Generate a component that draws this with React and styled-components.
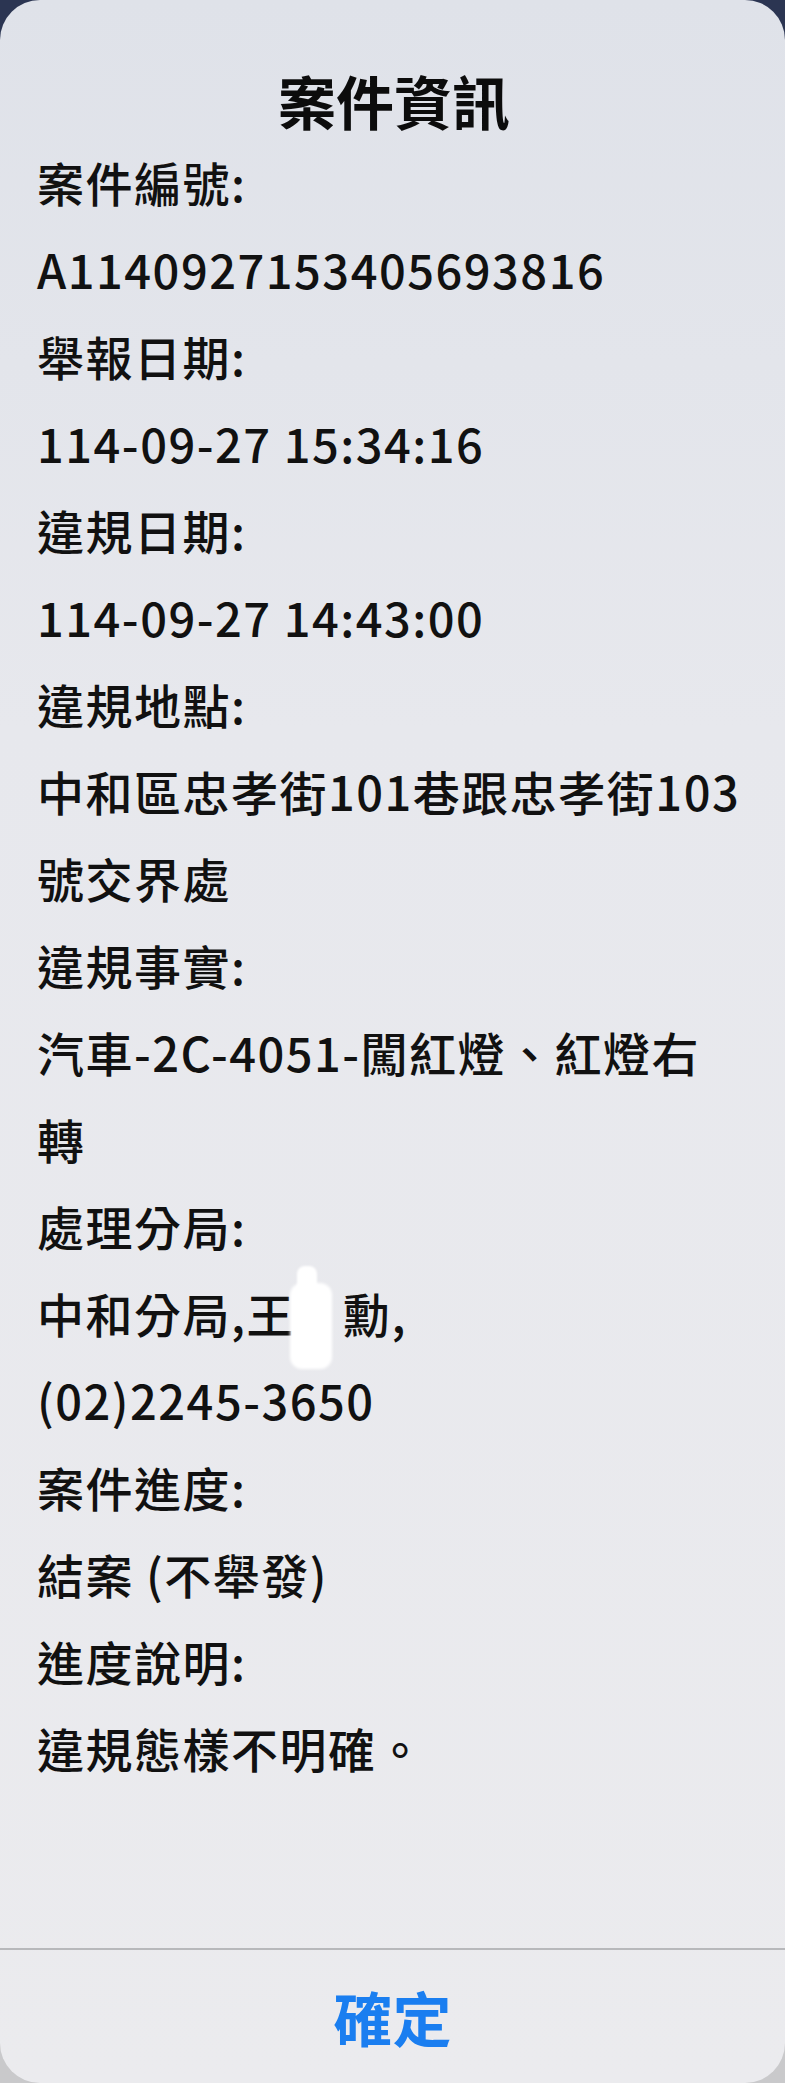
import styled, { createGlobalStyle } from "styled-components";

const GlobalStyle = createGlobalStyle`
html, body {
  margin: 0;
  padding: 0;
}
body {
  background: linear-gradient(180deg, #2b3552 0px, #2b3552 60px, #c9c9cb 60px);
  font-family: "Noto Sans CJK TC", "Noto Sans", sans-serif;
}
`;

const Dialog = styled.div`
display: flex;
flex-direction: column;
width: 785px;
height: 2083px;
border-radius: 40px;
overflow: hidden;
background: linear-gradient(180deg, #dfe2e9 0%, #e7e8ed 35%, #ebebee 100%);
color: #111;
`;

const Body = styled.div`
flex: 1;
display: flex;
flex-direction: column;
padding: 63px 40px 0 37px;
`;

const Title = styled.h1`
margin: 0;
text-align: center;
font-size: 58px;
font-weight: 700;
line-height: 75px;
color: #0c0c0c;
padding-left: 6px;
`;

const Line = styled.div`
font-size: 47px;
font-weight: 500;
line-height: 87px;
letter-spacing: 1.5px;
`;

const Redact = styled.span`
display: inline-block;
width: 48px;
height: 87px;
vertical-align: top;
position: relative;
&::before {
  content: "";
  position: absolute;
  left: 2px;
  top: -3px;
  width: 20px;
  height: 34px;
  border-radius: 8px;
  background: #fff;
  filter: blur(1px);
}
&::after {
  content: "";
  position: absolute;
  left: -5px;
  top: 14px;
  width: 42px;
  height: 86px;
  border-radius: 12px;
  background: #fff;
  filter: blur(1.5px);
}
`;

const Footer = styled.div`
height: 133px;
border-top: 2px solid #b7b8bb;
display: flex;
align-items: center;
justify-content: center;
`;

const Button = styled.button`
border: none;
background: none;
padding: 0;
font-family: inherit;
font-size: 59px;
font-weight: 700;
color: #1a7ef0;
line-height: 1;
`;

const rows = [
  "案件編號:",
  "A1140927153405693816",
  "舉報日期:",
  "114-09-27 15:34:16",
  "違規日期:",
  "114-09-27 14:43:00",
  "違規地點:",
  "中和區忠孝街101巷跟忠孝街103號交界處",
  "違規事實:",
  "汽車-2C-4051-闖紅燈、紅燈右轉",
  "處理分局:",
];

const rest = [
  "案件進度:",
  "結案 (不舉發)",
  "進度說明:",
  "違規態樣不明確。",
];

const App = () => {
  return <Dialog>
    <GlobalStyle />
    <Body>
      <Title>案件資訊</Title>
      {rows.map((r, i) => <Line key={i}>{r}</Line>)}
      <Line>中和分局,王<Redact />勳,<br />(02)2245-3650</Line>
      {rest.map((r, i) => <Line key={"r" + i}>{r}</Line>)}
    </Body>
    <Footer>
      <Button>確定</Button>
    </Footer>
  </Dialog>
}

export default App;
